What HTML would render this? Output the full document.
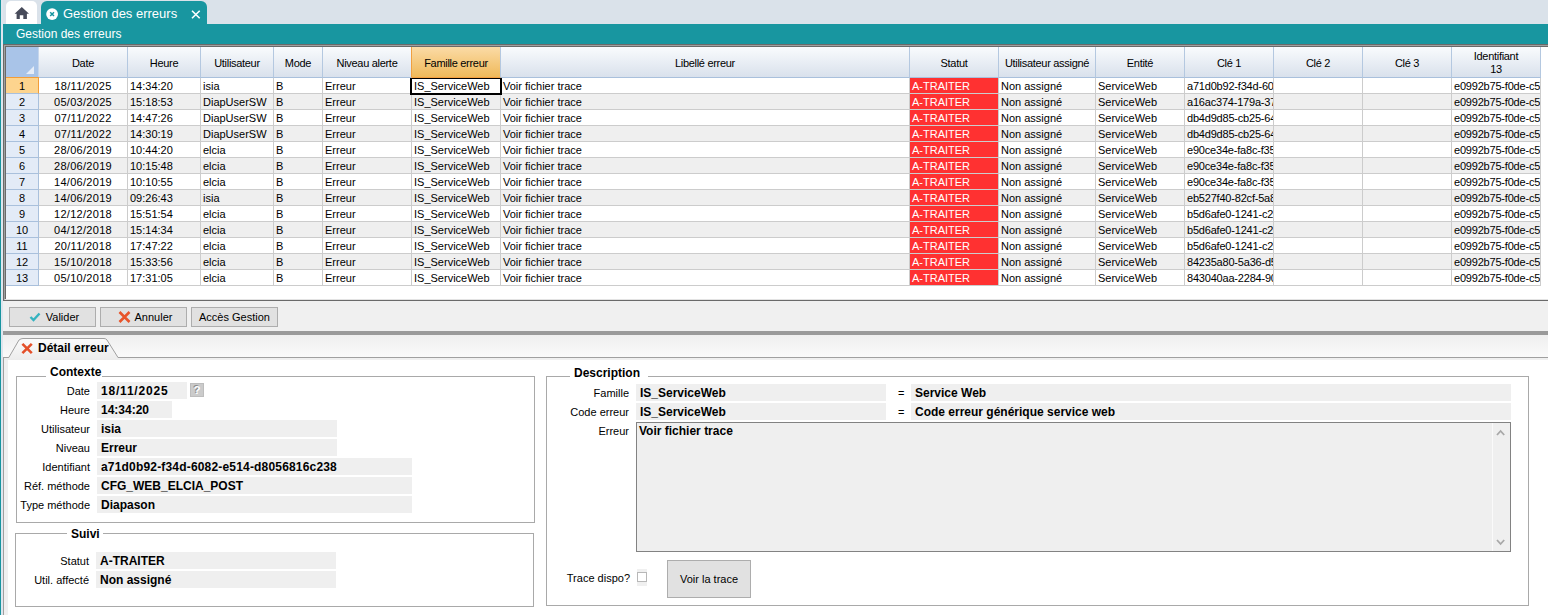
<!DOCTYPE html>
<html><head><meta charset="utf-8"><title>Gestion des erreurs</title>
<style>
*{box-sizing:border-box;margin:0;padding:0}
html,body{width:1548px;height:615px;overflow:hidden;background:#f0f0f0;font-family:"Liberation Sans",sans-serif;font-size:11px;color:#000}
.ab{position:absolute}
.hd{position:absolute;top:47px;height:31px;letter-spacing:-0.3px;background:linear-gradient(#f9fbfd,#d9e1ec);border-right:1px solid #b4c8e0;border-bottom:1px solid #a9c0dc;text-align:center;display:flex;align-items:center;justify-content:center;line-height:13px;padding-top:2px}
.hd.sel{background:linear-gradient(#fbdba6,#efb95a);border-bottom-color:#f5a040}
.hd.pre{border-right-color:#f0a040}
.cl{position:absolute;height:16px;border-right:1px solid #cccccc;border-bottom:1px solid #cccccc;white-space:nowrap;overflow:hidden;line-height:17px;padding-left:2px}
.rh{position:absolute;left:6px;width:33px;height:16px;background:#e3ebf7;border-right:1px solid #a9c0dc;border-bottom:1px solid #a9c0dc;text-align:center;line-height:17px}
.btn{position:absolute;height:20px;background:#e1e1e1;border:1px solid #adadad;line-height:18px;text-align:center;white-space:nowrap}
.lbl{position:absolute;text-align:right;white-space:nowrap;line-height:18px}
.fld{position:absolute;height:17px;background:#efefef;font-weight:bold;font-size:12px;line-height:19px;padding-left:4px;white-space:nowrap;overflow:hidden}
.gb{position:absolute;border:1px solid #a9a9a9}
.gt{position:absolute;font-weight:bold;font-size:12px;background:#fff;padding:0 3px 0 4px;line-height:16px;white-space:nowrap}
</style></head><body>

<div class="ab" style="left:0;top:0;width:1548px;height:24px;background:#dae2ea"></div>
<div class="ab" style="left:0;top:0;width:3px;height:615px;background:#dfe6ee"></div>
<div class="ab" style="left:0;top:0;width:1px;height:615px;background:#18949e"></div>
<div class="ab" style="left:6px;top:1px;width:30.5px;height:23px;background:#fff;border-radius:5px 5px 0 0"></div>
<svg class="ab" style="left:14px;top:6px" width="16" height="14" viewBox="0 0 16 14"><path d="M7.8 1 L0.6 7.8 L2.6 7.8 L2.6 13 L5.8 13 L5.8 9.3 L9.3 9.3 L9.3 13 L12.9 13 L12.9 7.8 L15 7.8 Z" fill="#474b5a"/></svg>
<div class="ab" style="left:41px;top:1px;width:166px;height:24px;background:#1896a0;border-radius:6px 6px 0 0"></div>
<svg class="ab" style="left:46px;top:8px" width="13" height="13" viewBox="0 0 13 13"><circle cx="6.1" cy="6.1" r="5.9" fill="#fff"/><path d="M4.2 4.2 L8 8 M8 4.2 L4.2 8" stroke="#1896a0" stroke-width="1.5"/></svg>
<div class="ab" style="left:63px;top:5px;font-size:13px;color:#fff;line-height:17px;white-space:nowrap">Gestion des erreurs</div>
<svg class="ab" style="left:191px;top:10px" width="10" height="9" viewBox="0 0 10 9"><path d="M1 0.7 L8.7 8.3 M8.7 0.7 L1 8.3" stroke="#fff" stroke-width="1.6"/></svg>
<div class="ab" style="left:3px;top:24px;width:1545px;height:20px;background:#1896a0"></div>
<div class="ab" style="left:16px;top:26px;font-size:12px;color:#fff;line-height:16px;white-space:nowrap">Gestion des erreurs</div>
<div class="ab" style="left:3px;top:44px;width:1545px;height:257px;background:#fff;border-top:1px solid #6a6a6a;border-left:1px solid #6a6a6a;border-bottom:1px solid #6a6a6a"></div>
<div class="ab" style="left:4px;top:45px;width:1544px;height:255px;border-top:1px solid #a0a0a0;border-left:1px solid #a0a0a0;border-bottom:1px solid #e3e3e3"></div>
<div class="ab" style="left:5px;top:46px;width:1543px;height:253px;border-top:1px solid #696969;border-left:1px solid #696969"></div>
<div class="ab" style="left:6px;top:47px;width:33px;height:31px;background:#a9c4e8;border-right:1px solid #c6d6ec;border-bottom:1px solid #a9c0dc"></div>
<svg class="ab" style="left:25px;top:65px" width="10" height="10" viewBox="0 0 10 10"><path d="M9 1 L9 9 L1 9 Z" fill="#e6edf8"/></svg>
<div class="hd" style="left:39px;width:89px">Date</div>
<div class="hd" style="left:128px;width:73px">Heure</div>
<div class="hd" style="left:201px;width:73px">Utilisateur</div>
<div class="hd" style="left:274px;width:49px">Mode</div>
<div class="hd pre" style="left:323px;width:89px">Niveau alerte</div>
<div class="hd sel" style="left:412px;width:89px">Famille erreur</div>
<div class="hd" style="left:501px;width:409px">Libellé erreur</div>
<div class="hd" style="left:910px;width:89px">Statut</div>
<div class="hd" style="left:999px;width:97px">Utilisateur assigné</div>
<div class="hd" style="left:1096px;width:89px">Entité</div>
<div class="hd" style="left:1185px;width:89px">Clé 1</div>
<div class="hd" style="left:1274px;width:89px">Clé 2</div>
<div class="hd" style="left:1363px;width:89px">Clé 3</div>
<div class="hd" style="left:1452px;width:89px">Identifiant<br>13</div>
<div class="rh" style="border-top:1px solid #f29d38;border-right-color:#f29d38;top:77px;height:17px;background:#fdd48e">1</div>
<div class="cl" style="left:39px;top:78px;width:89px;background:#fff;text-align:center;padding-left:0;letter-spacing:0.3px;">18/11/2025</div>
<div class="cl" style="left:128px;top:78px;width:73px;background:#fff;">14:34:20</div>
<div class="cl" style="left:201px;top:78px;width:73px;background:#fff;">isia</div>
<div class="cl" style="left:274px;top:78px;width:49px;background:#fff;">B</div>
<div class="cl" style="left:323px;top:78px;width:89px;background:#fff;">Erreur</div>
<div class="cl" style="left:412px;top:78px;width:89px;background:#fff;">IS_ServiceWeb</div>
<div class="cl" style="left:501px;top:78px;width:409px;background:#fff;">Voir fichier trace</div>
<div class="cl" style="left:910px;top:78px;width:89px;background:#fff;background:#ff3131;color:#fff;">A-TRAITER</div>
<div class="cl" style="left:999px;top:78px;width:97px;background:#fff;">Non assigné</div>
<div class="cl" style="left:1096px;top:78px;width:89px;background:#fff;">ServiceWeb</div>
<div class="cl" style="left:1185px;top:78px;width:89px;background:#fff;letter-spacing:-0.2px;">a71d0b92-f34d-6082-e514</div>
<div class="cl" style="left:1274px;top:78px;width:89px;background:#fff;"></div>
<div class="cl" style="left:1363px;top:78px;width:89px;background:#fff;"></div>
<div class="cl" style="left:1452px;top:78px;width:89px;background:#fff;letter-spacing:-0.2px;">e0992b75-f0de-c5a1-b2</div>
<div class="rh" style="top:94px;background:#e3ebf7">2</div>
<div class="cl" style="left:39px;top:94px;width:89px;background:#efefef;text-align:center;padding-left:0;letter-spacing:0.3px;">05/03/2025</div>
<div class="cl" style="left:128px;top:94px;width:73px;background:#efefef;">15:18:53</div>
<div class="cl" style="left:201px;top:94px;width:73px;background:#efefef;">DiapUserSW</div>
<div class="cl" style="left:274px;top:94px;width:49px;background:#efefef;">B</div>
<div class="cl" style="left:323px;top:94px;width:89px;background:#efefef;">Erreur</div>
<div class="cl" style="left:412px;top:94px;width:89px;background:#efefef;">IS_ServiceWeb</div>
<div class="cl" style="left:501px;top:94px;width:409px;background:#efefef;">Voir fichier trace</div>
<div class="cl" style="left:910px;top:94px;width:89px;background:#efefef;background:#ff3131;color:#fff;">A-TRAITER</div>
<div class="cl" style="left:999px;top:94px;width:97px;background:#efefef;">Non assigné</div>
<div class="cl" style="left:1096px;top:94px;width:89px;background:#efefef;">ServiceWeb</div>
<div class="cl" style="left:1185px;top:94px;width:89px;background:#efefef;letter-spacing:-0.2px;">a16ac374-179a-37a2-b1</div>
<div class="cl" style="left:1274px;top:94px;width:89px;background:#efefef;"></div>
<div class="cl" style="left:1363px;top:94px;width:89px;background:#efefef;"></div>
<div class="cl" style="left:1452px;top:94px;width:89px;background:#efefef;letter-spacing:-0.2px;">e0992b75-f0de-c5a1-b2</div>
<div class="rh" style="top:110px;background:#e3ebf7">3</div>
<div class="cl" style="left:39px;top:110px;width:89px;background:#fff;text-align:center;padding-left:0;letter-spacing:0.3px;">07/11/2022</div>
<div class="cl" style="left:128px;top:110px;width:73px;background:#fff;">14:47:26</div>
<div class="cl" style="left:201px;top:110px;width:73px;background:#fff;">DiapUserSW</div>
<div class="cl" style="left:274px;top:110px;width:49px;background:#fff;">B</div>
<div class="cl" style="left:323px;top:110px;width:89px;background:#fff;">Erreur</div>
<div class="cl" style="left:412px;top:110px;width:89px;background:#fff;">IS_ServiceWeb</div>
<div class="cl" style="left:501px;top:110px;width:409px;background:#fff;">Voir fichier trace</div>
<div class="cl" style="left:910px;top:110px;width:89px;background:#fff;background:#ff3131;color:#fff;">A-TRAITER</div>
<div class="cl" style="left:999px;top:110px;width:97px;background:#fff;">Non assigné</div>
<div class="cl" style="left:1096px;top:110px;width:89px;background:#fff;">ServiceWeb</div>
<div class="cl" style="left:1185px;top:110px;width:89px;background:#fff;letter-spacing:-0.2px;">db4d9d85-cb25-64a1-c3</div>
<div class="cl" style="left:1274px;top:110px;width:89px;background:#fff;"></div>
<div class="cl" style="left:1363px;top:110px;width:89px;background:#fff;"></div>
<div class="cl" style="left:1452px;top:110px;width:89px;background:#fff;letter-spacing:-0.2px;">e0992b75-f0de-c5a1-b2</div>
<div class="rh" style="top:126px;background:#e3ebf7">4</div>
<div class="cl" style="left:39px;top:126px;width:89px;background:#efefef;text-align:center;padding-left:0;letter-spacing:0.3px;">07/11/2022</div>
<div class="cl" style="left:128px;top:126px;width:73px;background:#efefef;">14:30:19</div>
<div class="cl" style="left:201px;top:126px;width:73px;background:#efefef;">DiapUserSW</div>
<div class="cl" style="left:274px;top:126px;width:49px;background:#efefef;">B</div>
<div class="cl" style="left:323px;top:126px;width:89px;background:#efefef;">Erreur</div>
<div class="cl" style="left:412px;top:126px;width:89px;background:#efefef;">IS_ServiceWeb</div>
<div class="cl" style="left:501px;top:126px;width:409px;background:#efefef;">Voir fichier trace</div>
<div class="cl" style="left:910px;top:126px;width:89px;background:#efefef;background:#ff3131;color:#fff;">A-TRAITER</div>
<div class="cl" style="left:999px;top:126px;width:97px;background:#efefef;">Non assigné</div>
<div class="cl" style="left:1096px;top:126px;width:89px;background:#efefef;">ServiceWeb</div>
<div class="cl" style="left:1185px;top:126px;width:89px;background:#efefef;letter-spacing:-0.2px;">db4d9d85-cb25-64a1-c3</div>
<div class="cl" style="left:1274px;top:126px;width:89px;background:#efefef;"></div>
<div class="cl" style="left:1363px;top:126px;width:89px;background:#efefef;"></div>
<div class="cl" style="left:1452px;top:126px;width:89px;background:#efefef;letter-spacing:-0.2px;">e0992b75-f0de-c5a1-b2</div>
<div class="rh" style="top:142px;background:#e3ebf7">5</div>
<div class="cl" style="left:39px;top:142px;width:89px;background:#fff;text-align:center;padding-left:0;letter-spacing:0.3px;">28/06/2019</div>
<div class="cl" style="left:128px;top:142px;width:73px;background:#fff;">10:44:20</div>
<div class="cl" style="left:201px;top:142px;width:73px;background:#fff;">elcia</div>
<div class="cl" style="left:274px;top:142px;width:49px;background:#fff;">B</div>
<div class="cl" style="left:323px;top:142px;width:89px;background:#fff;">Erreur</div>
<div class="cl" style="left:412px;top:142px;width:89px;background:#fff;">IS_ServiceWeb</div>
<div class="cl" style="left:501px;top:142px;width:409px;background:#fff;">Voir fichier trace</div>
<div class="cl" style="left:910px;top:142px;width:89px;background:#fff;background:#ff3131;color:#fff;">A-TRAITER</div>
<div class="cl" style="left:999px;top:142px;width:97px;background:#fff;">Non assigné</div>
<div class="cl" style="left:1096px;top:142px;width:89px;background:#fff;">ServiceWeb</div>
<div class="cl" style="left:1185px;top:142px;width:89px;background:#fff;letter-spacing:-0.2px;">e90ce34e-fa8c-f35d-a1</div>
<div class="cl" style="left:1274px;top:142px;width:89px;background:#fff;"></div>
<div class="cl" style="left:1363px;top:142px;width:89px;background:#fff;"></div>
<div class="cl" style="left:1452px;top:142px;width:89px;background:#fff;letter-spacing:-0.2px;">e0992b75-f0de-c5a1-b2</div>
<div class="rh" style="top:158px;background:#e3ebf7">6</div>
<div class="cl" style="left:39px;top:158px;width:89px;background:#efefef;text-align:center;padding-left:0;letter-spacing:0.3px;">28/06/2019</div>
<div class="cl" style="left:128px;top:158px;width:73px;background:#efefef;">10:15:48</div>
<div class="cl" style="left:201px;top:158px;width:73px;background:#efefef;">elcia</div>
<div class="cl" style="left:274px;top:158px;width:49px;background:#efefef;">B</div>
<div class="cl" style="left:323px;top:158px;width:89px;background:#efefef;">Erreur</div>
<div class="cl" style="left:412px;top:158px;width:89px;background:#efefef;">IS_ServiceWeb</div>
<div class="cl" style="left:501px;top:158px;width:409px;background:#efefef;">Voir fichier trace</div>
<div class="cl" style="left:910px;top:158px;width:89px;background:#efefef;background:#ff3131;color:#fff;">A-TRAITER</div>
<div class="cl" style="left:999px;top:158px;width:97px;background:#efefef;">Non assigné</div>
<div class="cl" style="left:1096px;top:158px;width:89px;background:#efefef;">ServiceWeb</div>
<div class="cl" style="left:1185px;top:158px;width:89px;background:#efefef;letter-spacing:-0.2px;">e90ce34e-fa8c-f35d-a1</div>
<div class="cl" style="left:1274px;top:158px;width:89px;background:#efefef;"></div>
<div class="cl" style="left:1363px;top:158px;width:89px;background:#efefef;"></div>
<div class="cl" style="left:1452px;top:158px;width:89px;background:#efefef;letter-spacing:-0.2px;">e0992b75-f0de-c5a1-b2</div>
<div class="rh" style="top:174px;background:#e3ebf7">7</div>
<div class="cl" style="left:39px;top:174px;width:89px;background:#fff;text-align:center;padding-left:0;letter-spacing:0.3px;">14/06/2019</div>
<div class="cl" style="left:128px;top:174px;width:73px;background:#fff;">10:10:55</div>
<div class="cl" style="left:201px;top:174px;width:73px;background:#fff;">elcia</div>
<div class="cl" style="left:274px;top:174px;width:49px;background:#fff;">B</div>
<div class="cl" style="left:323px;top:174px;width:89px;background:#fff;">Erreur</div>
<div class="cl" style="left:412px;top:174px;width:89px;background:#fff;">IS_ServiceWeb</div>
<div class="cl" style="left:501px;top:174px;width:409px;background:#fff;">Voir fichier trace</div>
<div class="cl" style="left:910px;top:174px;width:89px;background:#fff;background:#ff3131;color:#fff;">A-TRAITER</div>
<div class="cl" style="left:999px;top:174px;width:97px;background:#fff;">Non assigné</div>
<div class="cl" style="left:1096px;top:174px;width:89px;background:#fff;">ServiceWeb</div>
<div class="cl" style="left:1185px;top:174px;width:89px;background:#fff;letter-spacing:-0.2px;">e90ce34e-fa8c-f35d-a1</div>
<div class="cl" style="left:1274px;top:174px;width:89px;background:#fff;"></div>
<div class="cl" style="left:1363px;top:174px;width:89px;background:#fff;"></div>
<div class="cl" style="left:1452px;top:174px;width:89px;background:#fff;letter-spacing:-0.2px;">e0992b75-f0de-c5a1-b2</div>
<div class="rh" style="top:190px;background:#e3ebf7">8</div>
<div class="cl" style="left:39px;top:190px;width:89px;background:#efefef;text-align:center;padding-left:0;letter-spacing:0.3px;">14/06/2019</div>
<div class="cl" style="left:128px;top:190px;width:73px;background:#efefef;">09:26:43</div>
<div class="cl" style="left:201px;top:190px;width:73px;background:#efefef;">isia</div>
<div class="cl" style="left:274px;top:190px;width:49px;background:#efefef;">B</div>
<div class="cl" style="left:323px;top:190px;width:89px;background:#efefef;">Erreur</div>
<div class="cl" style="left:412px;top:190px;width:89px;background:#efefef;">IS_ServiceWeb</div>
<div class="cl" style="left:501px;top:190px;width:409px;background:#efefef;">Voir fichier trace</div>
<div class="cl" style="left:910px;top:190px;width:89px;background:#efefef;background:#ff3131;color:#fff;">A-TRAITER</div>
<div class="cl" style="left:999px;top:190px;width:97px;background:#efefef;">Non assigné</div>
<div class="cl" style="left:1096px;top:190px;width:89px;background:#efefef;">ServiceWeb</div>
<div class="cl" style="left:1185px;top:190px;width:89px;background:#efefef;letter-spacing:-0.2px;">eb527f40-82cf-5a8e-b2</div>
<div class="cl" style="left:1274px;top:190px;width:89px;background:#efefef;"></div>
<div class="cl" style="left:1363px;top:190px;width:89px;background:#efefef;"></div>
<div class="cl" style="left:1452px;top:190px;width:89px;background:#efefef;letter-spacing:-0.2px;">e0992b75-f0de-c5a1-b2</div>
<div class="rh" style="top:206px;background:#e3ebf7">9</div>
<div class="cl" style="left:39px;top:206px;width:89px;background:#fff;text-align:center;padding-left:0;letter-spacing:0.3px;">12/12/2018</div>
<div class="cl" style="left:128px;top:206px;width:73px;background:#fff;">15:51:54</div>
<div class="cl" style="left:201px;top:206px;width:73px;background:#fff;">elcia</div>
<div class="cl" style="left:274px;top:206px;width:49px;background:#fff;">B</div>
<div class="cl" style="left:323px;top:206px;width:89px;background:#fff;">Erreur</div>
<div class="cl" style="left:412px;top:206px;width:89px;background:#fff;">IS_ServiceWeb</div>
<div class="cl" style="left:501px;top:206px;width:409px;background:#fff;">Voir fichier trace</div>
<div class="cl" style="left:910px;top:206px;width:89px;background:#fff;background:#ff3131;color:#fff;">A-TRAITER</div>
<div class="cl" style="left:999px;top:206px;width:97px;background:#fff;">Non assigné</div>
<div class="cl" style="left:1096px;top:206px;width:89px;background:#fff;">ServiceWeb</div>
<div class="cl" style="left:1185px;top:206px;width:89px;background:#fff;letter-spacing:-0.2px;">b5d6afe0-1241-c2d3-e4</div>
<div class="cl" style="left:1274px;top:206px;width:89px;background:#fff;"></div>
<div class="cl" style="left:1363px;top:206px;width:89px;background:#fff;"></div>
<div class="cl" style="left:1452px;top:206px;width:89px;background:#fff;letter-spacing:-0.2px;">e0992b75-f0de-c5a1-b2</div>
<div class="rh" style="top:222px;background:#e3ebf7">10</div>
<div class="cl" style="left:39px;top:222px;width:89px;background:#efefef;text-align:center;padding-left:0;letter-spacing:0.3px;">04/12/2018</div>
<div class="cl" style="left:128px;top:222px;width:73px;background:#efefef;">15:14:34</div>
<div class="cl" style="left:201px;top:222px;width:73px;background:#efefef;">elcia</div>
<div class="cl" style="left:274px;top:222px;width:49px;background:#efefef;">B</div>
<div class="cl" style="left:323px;top:222px;width:89px;background:#efefef;">Erreur</div>
<div class="cl" style="left:412px;top:222px;width:89px;background:#efefef;">IS_ServiceWeb</div>
<div class="cl" style="left:501px;top:222px;width:409px;background:#efefef;">Voir fichier trace</div>
<div class="cl" style="left:910px;top:222px;width:89px;background:#efefef;background:#ff3131;color:#fff;">A-TRAITER</div>
<div class="cl" style="left:999px;top:222px;width:97px;background:#efefef;">Non assigné</div>
<div class="cl" style="left:1096px;top:222px;width:89px;background:#efefef;">ServiceWeb</div>
<div class="cl" style="left:1185px;top:222px;width:89px;background:#efefef;letter-spacing:-0.2px;">b5d6afe0-1241-c2d3-e4</div>
<div class="cl" style="left:1274px;top:222px;width:89px;background:#efefef;"></div>
<div class="cl" style="left:1363px;top:222px;width:89px;background:#efefef;"></div>
<div class="cl" style="left:1452px;top:222px;width:89px;background:#efefef;letter-spacing:-0.2px;">e0992b75-f0de-c5a1-b2</div>
<div class="rh" style="top:238px;background:#e3ebf7">11</div>
<div class="cl" style="left:39px;top:238px;width:89px;background:#fff;text-align:center;padding-left:0;letter-spacing:0.3px;">20/11/2018</div>
<div class="cl" style="left:128px;top:238px;width:73px;background:#fff;">17:47:22</div>
<div class="cl" style="left:201px;top:238px;width:73px;background:#fff;">elcia</div>
<div class="cl" style="left:274px;top:238px;width:49px;background:#fff;">B</div>
<div class="cl" style="left:323px;top:238px;width:89px;background:#fff;">Erreur</div>
<div class="cl" style="left:412px;top:238px;width:89px;background:#fff;">IS_ServiceWeb</div>
<div class="cl" style="left:501px;top:238px;width:409px;background:#fff;">Voir fichier trace</div>
<div class="cl" style="left:910px;top:238px;width:89px;background:#fff;background:#ff3131;color:#fff;">A-TRAITER</div>
<div class="cl" style="left:999px;top:238px;width:97px;background:#fff;">Non assigné</div>
<div class="cl" style="left:1096px;top:238px;width:89px;background:#fff;">ServiceWeb</div>
<div class="cl" style="left:1185px;top:238px;width:89px;background:#fff;letter-spacing:-0.2px;">b5d6afe0-1241-c2d3-e4</div>
<div class="cl" style="left:1274px;top:238px;width:89px;background:#fff;"></div>
<div class="cl" style="left:1363px;top:238px;width:89px;background:#fff;"></div>
<div class="cl" style="left:1452px;top:238px;width:89px;background:#fff;letter-spacing:-0.2px;">e0992b75-f0de-c5a1-b2</div>
<div class="rh" style="top:254px;background:#e3ebf7">12</div>
<div class="cl" style="left:39px;top:254px;width:89px;background:#efefef;text-align:center;padding-left:0;letter-spacing:0.3px;">15/10/2018</div>
<div class="cl" style="left:128px;top:254px;width:73px;background:#efefef;">15:33:56</div>
<div class="cl" style="left:201px;top:254px;width:73px;background:#efefef;">elcia</div>
<div class="cl" style="left:274px;top:254px;width:49px;background:#efefef;">B</div>
<div class="cl" style="left:323px;top:254px;width:89px;background:#efefef;">Erreur</div>
<div class="cl" style="left:412px;top:254px;width:89px;background:#efefef;">IS_ServiceWeb</div>
<div class="cl" style="left:501px;top:254px;width:409px;background:#efefef;">Voir fichier trace</div>
<div class="cl" style="left:910px;top:254px;width:89px;background:#efefef;background:#ff3131;color:#fff;">A-TRAITER</div>
<div class="cl" style="left:999px;top:254px;width:97px;background:#efefef;">Non assigné</div>
<div class="cl" style="left:1096px;top:254px;width:89px;background:#efefef;">ServiceWeb</div>
<div class="cl" style="left:1185px;top:254px;width:89px;background:#efefef;letter-spacing:-0.2px;">84235a80-5a36-d5e1-a2</div>
<div class="cl" style="left:1274px;top:254px;width:89px;background:#efefef;"></div>
<div class="cl" style="left:1363px;top:254px;width:89px;background:#efefef;"></div>
<div class="cl" style="left:1452px;top:254px;width:89px;background:#efefef;letter-spacing:-0.2px;">e0992b75-f0de-c5a1-b2</div>
<div class="rh" style="top:270px;background:#e3ebf7">13</div>
<div class="cl" style="left:39px;top:270px;width:89px;background:#fff;text-align:center;padding-left:0;letter-spacing:0.3px;">05/10/2018</div>
<div class="cl" style="left:128px;top:270px;width:73px;background:#fff;">17:31:05</div>
<div class="cl" style="left:201px;top:270px;width:73px;background:#fff;">elcia</div>
<div class="cl" style="left:274px;top:270px;width:49px;background:#fff;">B</div>
<div class="cl" style="left:323px;top:270px;width:89px;background:#fff;">Erreur</div>
<div class="cl" style="left:412px;top:270px;width:89px;background:#fff;">IS_ServiceWeb</div>
<div class="cl" style="left:501px;top:270px;width:409px;background:#fff;">Voir fichier trace</div>
<div class="cl" style="left:910px;top:270px;width:89px;background:#fff;background:#ff3131;color:#fff;">A-TRAITER</div>
<div class="cl" style="left:999px;top:270px;width:97px;background:#fff;">Non assigné</div>
<div class="cl" style="left:1096px;top:270px;width:89px;background:#fff;">ServiceWeb</div>
<div class="cl" style="left:1185px;top:270px;width:89px;background:#fff;letter-spacing:-0.2px;">843040aa-2284-90b1-c7</div>
<div class="cl" style="left:1274px;top:270px;width:89px;background:#fff;"></div>
<div class="cl" style="left:1363px;top:270px;width:89px;background:#fff;"></div>
<div class="cl" style="left:1452px;top:270px;width:89px;background:#fff;letter-spacing:-0.2px;">e0992b75-f0de-c5a1-b2</div>
<div class="ab" style="left:410px;top:78px;width:92px;height:17px;border:2px solid #000;border-top-width:1.5px;border-bottom-width:2.5px"></div>
<div class="btn" style="left:9px;top:307px;width:87px;padding-left:20px">Valider</div>
<svg class="ab" style="left:29px;top:312px" width="12" height="10" viewBox="0 0 12 10"><path d="M1.5 5 L4.5 8 L10.5 1.5" stroke="#35b3c0" stroke-width="2.4" fill="none"/></svg>
<div class="btn" style="left:100px;top:307px;width:87px;padding-left:20px">Annuler</div>
<svg class="ab" style="left:118px;top:311px" width="13" height="12" viewBox="0 0 13 12"><path d="M1.5 1 L11.5 11 M11.5 1 L1.5 11" stroke="#e8542a" stroke-width="2.6"/></svg>
<div class="btn" style="left:191px;top:307px;width:87px">Accès Gestion</div>
<div class="ab" style="left:3px;top:331px;width:1545px;height:4px;background:#9a9a9a"></div>
<div class="ab" style="left:3px;top:335px;width:1545px;height:22px;background:linear-gradient(#efefef,#fafafa)"></div>
<div class="ab" style="left:3px;top:357px;width:1545px;height:258px;background:#f0f0f0;border-left:1px solid #a0a0a0;border-top:1px solid #a0a0a0"></div>
<div class="ab" style="left:8px;top:360px;width:1540px;height:255px;background:#fff"></div>
<svg class="ab" style="left:0;top:335px" width="130" height="25" viewBox="0 0 130 25"><defs><linearGradient id="tg" x1="0" y1="0" x2="0" y2="1"><stop offset="0" stop-color="#fbfbfb"/><stop offset="1" stop-color="#ececec"/></linearGradient></defs><path d="M4 22.5 L8.8 22.5 L19 5 Q21 3.5 23 3.5 L104 3.5 Q106 3.5 107 5 L118 22.5 L130 22.5 L130 25 L4 25 Z" fill="url(#tg)"/><path d="M4 22.5 L8.8 22.5 L19 5 Q21 3.5 23 3.5 L104 3.5 Q106 3.5 107 5 L118 22.5 L130 22.5" fill="none" stroke="#a0a0a0" stroke-width="1"/></svg>
<svg class="ab" style="left:21px;top:343px" width="13" height="12" viewBox="0 0 13 12"><path d="M1.4 0.9 L10.8 10.1 M10.8 0.9 L1.4 10.1" stroke="#e4502a" stroke-width="2.6"/></svg>
<div class="ab" style="left:38px;top:340px;font-weight:bold;font-size:12px;line-height:16px;white-space:nowrap">Détail erreur</div>
<div class="gb" style="left:16px;top:376px;width:519px;height:147px"></div>
<div class="gt" style="left:46px;top:364px;padding-right:1px">Contexte</div>
<div class="lbl" style="left:0;width:90px;top:382px">Date</div>
<div class="fld" style="left:97px;top:382px;width:90px;letter-spacing:0.8px;">18/11/2025</div>
<div class="lbl" style="left:0;width:90px;top:401px">Heure</div>
<div class="fld" style="left:97px;top:401px;width:75px;">14:34:20</div>
<div class="lbl" style="left:0;width:90px;top:420px">Utilisateur</div>
<div class="fld" style="left:97px;top:420px;width:240px;">isia</div>
<div class="lbl" style="left:0;width:90px;top:439px">Niveau</div>
<div class="fld" style="left:97px;top:439px;width:240px;">Erreur</div>
<div class="lbl" style="left:0;width:90px;top:458px">Identifiant</div>
<div class="fld" style="left:97px;top:458px;width:315px;letter-spacing:0.18px;">a71d0b92-f34d-6082-e514-d8056816c238</div>
<div class="lbl" style="left:0;width:90px;top:477px">Réf. méthode</div>
<div class="fld" style="left:97px;top:477px;width:315px;">CFG_WEB_ELCIA_POST</div>
<div class="lbl" style="left:0;width:90px;top:496px">Type méthode</div>
<div class="fld" style="left:97px;top:496px;width:315px;">Diapason</div>
<div class="ab" style="left:190px;top:383px;width:14px;height:14px;background:#cbcbcb;border:1px solid #bdbdbd;color:#fff;font-weight:bold;font-size:11px;text-align:center;line-height:13px;text-shadow:-1px -1px 0 #8a8a8a">?</div>
<div class="gb" style="left:15px;top:533px;width:519px;height:74px"></div>
<div class="gt" style="left:67px;top:526px">Suivi</div>
<div class="lbl" style="left:0;width:89px;top:552px">Statut</div>
<div class="fld" style="left:96px;top:552px;width:240px">A-TRAITER</div>
<div class="lbl" style="left:0;width:89px;top:571px">Util. affecté</div>
<div class="fld" style="left:96px;top:571px;width:240px">Non assigné</div>
<div class="gb" style="left:546px;top:376px;width:983px;height:230px"></div>
<div class="gt" style="left:570px;top:365px;padding-right:8px">Description</div>
<div class="lbl" style="left:540px;width:89px;top:384px">Famille</div>
<div class="fld" style="left:636px;top:384px;width:250px">IS_ServiceWeb</div>
<div class="ab" style="left:898px;top:385px;line-height:17px">=</div>
<div class="fld" style="left:911px;top:384px;width:600px">Service Web</div>
<div class="lbl" style="left:540px;width:89px;top:403px">Code erreur</div>
<div class="fld" style="left:636px;top:403px;width:250px">IS_ServiceWeb</div>
<div class="ab" style="left:898px;top:404px;line-height:17px">=</div>
<div class="fld" style="left:911px;top:403px;width:600px">Code erreur générique service web</div>
<div class="lbl" style="left:540px;width:89px;top:422px">Erreur</div>
<div class="ab" style="left:636px;top:422px;width:875px;height:130px;background:#efefef;border:1px solid #828282"></div>
<div class="ab" style="left:639px;top:424px;font-weight:bold;font-size:12px;line-height:15px;white-space:nowrap">Voir fichier trace</div>
<div class="ab" style="left:1492px;top:423px;width:1px;height:128px;background:#fafafa"></div>
<svg class="ab" style="left:1496px;top:428px" width="10" height="9" viewBox="0 0 10 9"><path d="M1 7 L4.6 3 L8.2 7" stroke="#a8a8a8" stroke-width="1.8" fill="none"/></svg>
<svg class="ab" style="left:1496px;top:538px" width="10" height="9" viewBox="0 0 10 9"><path d="M1 2 L4.6 6 L8.2 2" stroke="#a8a8a8" stroke-width="1.8" fill="none"/></svg>
<div class="lbl" style="left:540px;width:90px;top:569px">Trace dispo?</div>
<div class="ab" style="left:637px;top:569px;width:10px;height:17px;background:#f0f0f0"></div>
<div class="ab" style="left:637px;top:572px;width:10px;height:10px;border:1px solid #b8b8b8;background:#fff"></div>
<div class="btn" style="left:667px;top:560px;width:84px;height:38px;line-height:36px">Voir la trace</div>
</body></html>
